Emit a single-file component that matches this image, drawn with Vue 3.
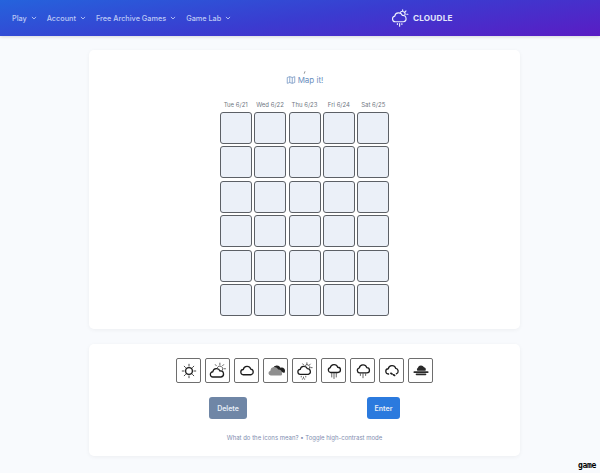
<template>
  <div class="page">
    <nav class="navbar">
      <ul class="menu">
        <li v-for="m in menu" :key="m">
          {{ m }}
          <svg class="caret" viewBox="0 0 10 6"><path d="M1.5 1.2 5 4.6l3.5-3.4" /></svg>
        </li>
      </ul>
      <div class="brand">
        <svg class="logo" viewBox="0 0 24 24">
          <path d="M5.500 17a3.800 3.800 0 0 1-.5-7.500 5.200 5.200 0 0 1 10-1 4.300 4.300 0 0 1 1.500 8.500z" />
          <path d="M12.500 4.500a3.500 3.500 0 0 1 6 3.500M15.500 1v1.500M20 2.500l-1 1.200M22.500 7H21M8.500 19.500v1M11.500 19.500V23M14.500 19.500v1" />
        </svg>
        <span>CLOUDLE</span>
      </div>
    </nav>

    <main class="content">
      <section class="card board-card">
        <svg class="tick" viewBox="0 0 3 3"><path d="M2 .3 1.200 2.700" /></svg>
        <a class="map-link">
          <svg class="map-icon" viewBox="0 0 24 24">
            <path d="M3 6l6-2 6 2 6-2v14l-6 2-6-2-6 2zM9 4v14M15 6v14" />
          </svg>
          Map it!
        </a>
        <div class="days">
          <span v-for="d in days" :key="d">{{ d }}</span>
        </div>
        <div class="grid">
          <div v-for="n in 30" :key="n" class="cell"></div>
        </div>
      </section>

      <section class="card keys-card">
        <div class="keys">
          <button class="key">
            <svg viewBox="0 0 24 24">
              <circle cx="12" cy="12" r="4.500" />
              <path class="thin" d="M12 3v2.500M12 18.500V21M3 12h2.500M18.500 12H21M5.600 5.600l1.700 1.700M16.700 16.700l1.700 1.700M5.600 18.400l1.700-1.700M16.700 7.300l1.700-1.700" />
            </svg>
          </button>
          <button class="key">
            <svg viewBox="0 0 24 24">
              <path d="M5.500 20a3.500 3.500 0 0 1-.4-7 5 5 0 0 1 9.600-1 4 4 0 0 1 1.300 8z" />
              <path class="soft" d="M11 7.500a3.800 3.800 0 0 1 7 3.500M14.500 1.500v2.200M19.500 3.500l-1.400 1.500M22 9h-2M8.500 3.500l1.200 1.500" />
            </svg>
          </button>
          <button class="key">
            <svg viewBox="0 0 24 24">
              <path d="M7.500 17a3.500 3.500 0 0 1-.5-7 5.200 5.200 0 0 1 10-.5 3.800 3.800 0 0 1 .2 7.500z" />
            </svg>
          </button>
          <button class="key">
            <svg viewBox="0 0 24 24">
              <path class="dark" d="M8 8.500a5.500 5.500 0 0 1 10-1 4.500 4.500 0 0 1 5 7z" />
              <path class="grey" d="M5 18a3.300 3.300 0 0 1-.5-6.500 5.500 5.500 0 0 1 10.500-1.500 4.500 4.500 0 0 1 5 5 2.500 2.500 0 0 1-1 3z" />
            </svg>
          </button>
          <button class="key">
            <svg viewBox="0 0 24 24">
              <path d="M6 16.500a3.300 3.300 0 0 1-.4-6.600 5 5 0 0 1 9.600-1 3.900 3.900 0 0 1 1.300 7.600z" />
              <path class="soft" d="M11.500 5.500a3.500 3.500 0 0 1 6.500 3M14.500 1v2M19 2.800l-1.300 1.400M21.500 7.500h-2M9 2.500l1.100 1.400" />
              <path class="soft" d="M7 19v1M10 20v1.500M13 19v1M8.500 22.500v.5M11.500 22.500v.5" />
            </svg>
          </button>
          <button class="key">
            <svg viewBox="0 0 24 24">
              <path d="M7.500 14a3.300 3.300 0 0 1-.5-6.500 5.200 5.200 0 0 1 10-.5 3.500 3.500 0 0 1 .2 7z" />
              <path class="rain" d="M9 15v5M12 15v7M15 15v5" />
            </svg>
          </button>
          <button class="key">
            <svg viewBox="0 0 24 24">
              <path d="M7.500 14.500a3.300 3.300 0 0 1-.5-6.500 5.200 5.200 0 0 1 10-.5 3.500 3.500 0 0 1 .2 7z" />
              <path class="rain" d="M12 15.500V21M8.500 15.500V18M15.500 15.500V18" />
            </svg>
          </button>
          <button class="key">
            <svg viewBox="0 0 24 24">
              <path d="M7.500 16a3.500 3.500 0 0 1-.5-7 5.200 5.200 0 0 1 10-.5 3.800 3.800 0 0 1 .8 7.300" />
              <path class="fat" d="M10.500 15l1.500 1M14 17l1.500 1" />
            </svg>
          </button>
          <button class="key">
            <svg viewBox="0 0 24 24">
              <path class="solid" d="M7 11.500a3 3 0 0 1 .8-4 4.500 4.500 0 0 1 8.200-.5 3.300 3.300 0 0 1 2 4.500z" />
              <path class="fog" d="M3 13.500h18" />
              <path class="fog" d="M6 16.500h12" />
            </svg>
          </button>
        </div>

        <div class="actions">
          <button class="btn delete">Delete</button>
          <button class="btn enter">Enter</button>
        </div>

        <p class="foot">What do the icons mean? • Toggle high-contrast mode</p>
      </section>
    </main>

    <span class="watermark">game</span>
  </div>
</template>

<script setup>
const menu = ['Play', 'Account', 'Free Archive Games', 'Game Lab']
const days = ['Tue 6/21', 'Wed 6/22', 'Thu 6/23', 'Fri 6/24', 'Sat 6/25']
</script>

<style>
html, body {
  margin: 0;
  background: #f8fafd;
}
</style>

<style scoped>
.page {
  position: relative;
  width: 600px;
  height: 473px;
  overflow: hidden;
  background: #f8fafd;
  font-family: Inter, "Noto Sans", sans-serif;
}
.navbar {
  height: 36px;
  display: flex;
  align-items: center;
  padding-left: 12px;
  background: linear-gradient(172deg, #2563dc 0%, #3a3cd0 50%, #5a1cc4 100%);
  box-shadow: 0 1px 3px #0002;
}
.menu {
  display: flex;
  gap: 10px;
  width: 379px;
  margin: 0;
  padding: 0;
  list-style: none;
  color: #bcc9f5;
  font-size: 7.300px;
  font-weight: 500;
}
.menu li {
  display: flex;
  align-items: center;
  gap: 4px;
}
.caret {
  width: 6px;
  height: 4px;
  fill: none;
  stroke: #bcc9f5;
  stroke-width: 1.500;
}
.brand {
  display: flex;
  align-items: center;
  gap: 4px;
  margin-top: -1px;
  color: #e4e8fb;
  font-size: 8.200px;
  font-weight: 700;
  letter-spacing: 0.2px;
}
.logo {
  width: 18px;
  height: 18px;
  fill: none;
  stroke: #eef1fd;
  stroke-width: 1.500;
  stroke-linecap: round;
}
.content {
  display: flex;
  flex-direction: column;
  gap: 15px;
  width: 431px;
  margin: 14px 0 0 89px;
}
.card {
  background: #fff;
  border-radius: 5px;
  box-shadow: 0 1px 4px #0000000d;
}
.board-card {
  height: 279px;
  display: flex;
  flex-direction: column;
  align-items: center;
  box-sizing: border-box;
  padding-top: 21px;
}
.tick {
  width: 3px;
  height: 3px;
  fill: none;
  stroke: #666;
  stroke-width: .7;
}
.map-link {
  display: flex;
  align-items: center;
  gap: 2px;
  height: 11px;
  color: #6b8fc0;
  font-size: 8px;
}
.map-icon {
  width: 10px;
  height: 10px;
  fill: none;
  stroke: #6b8fc0;
  stroke-width: 1.800;
}
.days {
  display: grid;
  grid-template-columns: repeat(5, 34.400px);
  margin-top: 14.500px;
  color: #6f7782;
  font-size: 6px;
  line-height: 10px;
  text-align: center;
}
.grid {
  display: grid;
  grid-template-columns: repeat(5, 32px);
  grid-auto-rows: 32px;
  gap: 2.400px;
  margin-top: 2.500px;
}
.cell {
  box-sizing: border-box;
  background: #ebf0f8;
  border: 1px solid #5c6066;
  border-radius: 3px;
}
.keys-card {
  height: 112px;
  display: flex;
  flex-direction: column;
  align-items: center;
  box-sizing: border-box;
  padding-top: 14px;
}
.keys {
  display: flex;
  gap: 4px;
}
.key {
  box-sizing: border-box;
  width: 25px;
  height: 25px;
  display: flex;
  align-items: center;
  justify-content: center;
  padding: 0;
  background: #fff;
  border: 1px solid #6e6e6e;
  border-radius: 2px;
}
.key svg {
  width: 18px;
  height: 18px;
  fill: none;
  stroke: #1c1c1c;
  stroke-width: 1.700;
  stroke-linecap: round;
}
.key .thin {
  stroke-width: 1.300;
  stroke: #444;
}
.key .rain {
  stroke-width: 1.100;
  stroke: #444;
}
.key .soft {
  stroke-width: 1.200;
  stroke: #555;
}
.key .fat {
  stroke-width: 2.200;
}
.key .dark {
  fill: #222;
  stroke: none;
}
.key .grey {
  fill: #8f8f8f;
  stroke: none;
}
.key .solid {
  fill: #2a2a2a;
  stroke: none;
}
.key .fog {
  stroke-width: 2.200;
  stroke: #2a2a2a;
}
.actions {
  display: flex;
  justify-content: space-between;
  width: 191px;
  margin-top: 14px;
}
.btn {
  height: 22px;
  border: 0;
  border-radius: 3px;
  color: #e6edf7;
  font-family: inherit;
  font-size: 7px;
  font-weight: 600;
}
.delete {
  width: 38px;
  background: #6f86a6;
}
.enter {
  width: 33px;
  background: #2b7ade;
}
.foot {
  margin: 15px 0 0;
  color: #7f8eb0;
  font-size: 6px;
  line-height: 8px;
}
.watermark {
  position: absolute;
  right: 4px;
  bottom: 3px;
  color: #000;
  font-family: "DejaVu Sans Mono", monospace;
  font-size: 8px;
  font-weight: 700;
  letter-spacing: -0.300px;
}
</style>
